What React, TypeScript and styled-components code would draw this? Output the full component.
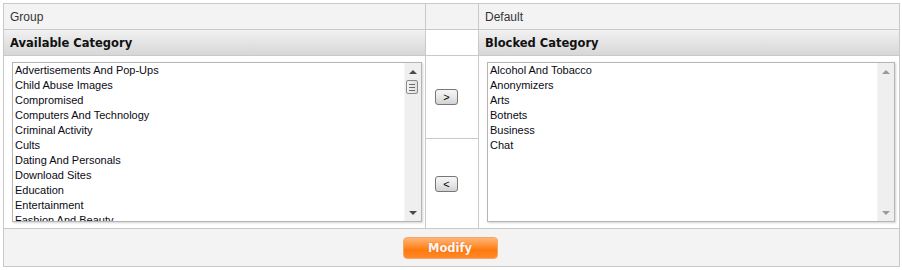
import styled, { createGlobalStyle } from "styled-components";

const GlobalStyle = createGlobalStyle`
  body {
    margin: 0;
    background: #fff;
  }
`;

const Page = styled.div`
  padding: 3px;
`;

const Panel = styled.div`
  display: grid;
  grid-template-columns: 421px 52px 420px;
  grid-template-rows: 25px 25px 172px 37px;
  gap: 1px;
  padding: 1px;
  width: 897px;
  box-sizing: border-box;
  background: #c9c9c9;
`;

const LabelCell = styled.div`
  display: flex;
  align-items: center;
  padding-left: 6px;
  background: #f3f3f3;
  color: #333;
  font-family: "Liberation Sans", Arial, sans-serif;
  font-size: 12px;
`;

const HeaderCell = styled.div<{ $blank?: boolean }>`
  display: flex;
  align-items: center;
  padding-left: 6px;
  background: ${(p) =>
    p.$blank ? "#fff" : "linear-gradient(#f1f1f1, #e4e4e4 50%, #d7d7d7)"};
  color: #111;
  font-family: "DejaVu Sans", Verdana, sans-serif;
  font-weight: bold;
  font-size: 11.5px;
`;

const ListCell = styled.div`
  padding: 6px 0 6px 8px;
  background: #fff;
`;

const ListBox = styled.div<{ $width: number }>`
  display: flex;
  width: ${(p) => p.$width}px;
  height: 160px;
  box-sizing: border-box;
  border: 1px solid #b5b5b5;
  box-shadow: 1px 1px 2px rgba(0, 0, 0, 0.18);
  background: #fff;
`;

const Items = styled.ul`
  flex: 1;
  margin: 0;
  padding: 0 0 0 2px;
  list-style: none;
  overflow: hidden;
  font-family: "Liberation Sans", Arial, sans-serif;
  font-size: 11px;
  line-height: 15px;
  color: #0a0a14;
`;

const Item = styled.li`
  white-space: nowrap;
`;

const Track = styled.div`
  display: flex;
  flex-direction: column;
  width: 16px;
  background: #efefef;
  border-left: 1px solid #f6f6f6;
`;

const ArrowBox = styled.div`
  display: flex;
  align-items: center;
  justify-content: center;
  height: 17px;
`;

const Arrow = styled.span<{ $down?: boolean; $disabled?: boolean }>`
  width: 0;
  height: 0;
  border-left: 4px solid transparent;
  border-right: 4px solid transparent;
  ${(p) =>
    p.$down
      ? `border-top: 4px solid ${p.$disabled ? "#9a9a9a" : "#4a4a4a"};`
      : `border-bottom: 4px solid ${p.$disabled ? "#9a9a9a" : "#4a4a4a"};`}
`;

const Thumb = styled.div`
  display: flex;
  flex-direction: column;
  justify-content: center;
  gap: 2px;
  align-items: center;
  width: 12px;
  height: 14px;
  margin-left: 1px;
  box-sizing: border-box;
  border: 1px solid #8a8a8a;
  border-radius: 2px;
  background: linear-gradient(90deg, #f4f4f4, #dedede);
`;

const Grip = styled.span`
  width: 6px;
  height: 1px;
  background: #6a6a6a;
`;

const Spacer = styled.div`
  flex: 1;
`;

const MoveColumn = styled.div`
  display: grid;
  grid-template-rows: 82px 89px;
  gap: 1px;
  background: #c9c9c9;
`;

const MoveCell = styled.div`
  display: flex;
  align-items: center;
  padding-left: 9px;
  background: #fff;
`;

const MoveButton = styled.button`
  width: 23px;
  height: 16px;
  padding: 0;
  border: 1px solid #777;
  border-radius: 3px;
  background: linear-gradient(#f6f6f6, #e8e8e8 50%, #d2d2d2);
  color: #000;
  font-family: "Liberation Sans", Arial, sans-serif;
  font-size: 11px;
  line-height: 12px;
`;

const Footer = styled.div`
  grid-column: 1 / -1;
  display: flex;
  align-items: center;
  justify-content: center;
  padding-right: 3px;
  background: #f3f3f3;
`;

const ModifyButton = styled.button`
  width: 95px;
  height: 22px;
  margin-top: 1px;
  padding: 0;
  border: 1px solid #f5a768;
  border-radius: 4px;
  background: linear-gradient(#ffb476, #ff8f33 40%, #ff790c 60%, #ff8a2a);
  color: #fff6f4;
  font-family: "DejaVu Sans", Verdana, sans-serif;
  font-weight: bold;
  font-size: 11.5px;
  text-shadow: 0 0 1px rgba(190, 70, 0, 0.5);
`;

const available = [
  "Advertisements And Pop-Ups",
  "Child Abuse Images",
  "Compromised",
  "Computers And Technology",
  "Criminal Activity",
  "Cults",
  "Dating And Personals",
  "Download Sites",
  "Education",
  "Entertainment",
  "Fashion And Beauty",
];

const blocked = [
  "Alcohol And Tobacco",
  "Anonymizers",
  "Arts",
  "Botnets",
  "Business",
  "Chat",
];

function ScrollBar({ disabled }: { disabled?: boolean }) {
  return (
    <Track>
      <ArrowBox>
        <Arrow $disabled={disabled} />
      </ArrowBox>
      {!disabled && (
        <Thumb>
          <Grip />
          <Grip />
          <Grip />
        </Thumb>
      )}
      <Spacer />
      <ArrowBox>
        <Arrow $down $disabled={disabled} />
      </ArrowBox>
    </Track>
  );
}

function CategoryList({
  items,
  width,
  disabled,
}: {
  items: string[];
  width: number;
  disabled?: boolean;
}) {
  return (
    <ListBox $width={width}>
      <Items>
        {items.map((name) => (
          <Item key={name}>{name}</Item>
        ))}
      </Items>
      <ScrollBar disabled={disabled} />
    </ListBox>
  );
}

function App() {
  return (
    <Page>
      <GlobalStyle />
      <Panel>
        <LabelCell>Group</LabelCell>
        <LabelCell />
        <LabelCell>Default</LabelCell>

        <HeaderCell>Available Category</HeaderCell>
        <HeaderCell $blank />
        <HeaderCell>Blocked Category</HeaderCell>

        <ListCell>
          <CategoryList items={available} width={410} />
        </ListCell>
        <MoveColumn>
          <MoveCell>
            <MoveButton>&gt;</MoveButton>
          </MoveCell>
          <MoveCell>
            <MoveButton>&lt;</MoveButton>
          </MoveCell>
        </MoveColumn>
        <ListCell>
          <CategoryList items={blocked} width={408} disabled />
        </ListCell>

        <Footer>
          <ModifyButton>Modify</ModifyButton>
        </Footer>
      </Panel>
    </Page>
  );
}

export default App;
